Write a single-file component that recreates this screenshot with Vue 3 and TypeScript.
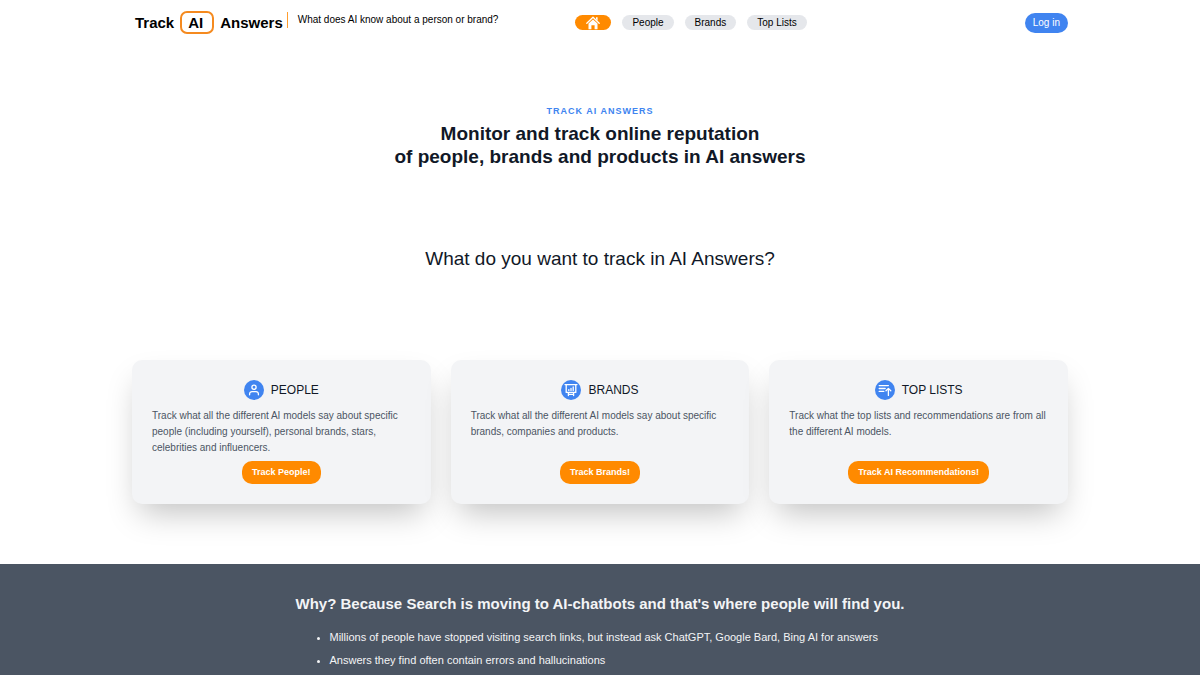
<script setup lang="ts">
interface Card {
  icon: 'person' | 'board' | 'list'
  title: string
  text: string
  action: string
}

const links: string[] = ['People', 'Brands', 'Top Lists']

const cards: Card[] = [
  {
    icon: 'person',
    title: 'PEOPLE',
    text: 'Track what all the different AI models say about specific people (including yourself), personal brands, stars, celebrities and influencers.',
    action: 'Track People!',
  },
  {
    icon: 'board',
    title: 'BRANDS',
    text: 'Track what all the different AI models say about specific brands, companies and products.',
    action: 'Track Brands!',
  },
  {
    icon: 'list',
    title: 'TOP LISTS',
    text: 'Track what the top lists and recommendations are from all the different AI models.',
    action: 'Track AI Recommendations!',
  },
]

const reasons: string[] = [
  'Millions of people have stopped visiting search links, but instead ask ChatGPT, Google Bard, Bing AI for answers',
  'Answers they find often contain errors and hallucinations',
]
</script>

<template>
  <div class="page">
    <header class="header wrap">
      <a class="logo" href="#" aria-label="Track AI Answers">
        <span>Track</span>
        <span class="logo-box">AI</span>
        <span>Answers</span>
      </a>
      <p class="tagline">What does AI know about a person or brand?</p>
      <nav class="nav">
        <a class="pill home" href="#" aria-label="Home">
          <svg viewBox="0 0 14 14" width="14" height="14" aria-hidden="true">
            <path d="M2.5 7.6V13.2H5.4V9.2H8.6V13.2H11.5V7.6L7 3.4Z" fill="#fff" />
            <path d="M0.8 7.2L7 1.3L13.2 7.2" fill="none" stroke="#fff" stroke-width="1.3" stroke-linecap="round" stroke-linejoin="round" />
            <path d="M10 1.2H11.6V4.8L10 3.3Z" fill="#fff" />
          </svg>
        </a>
        <a v-for="link in links" :key="link" class="pill" href="#">{{ link }}</a>
      </nav>
      <button class="login" type="button">Log in</button>
    </header>

    <main>
      <section class="hero">
        <p class="eyebrow">TRACK AI ANSWERS</p>
        <h1>Monitor and track online reputation<br />of people, brands and products in AI answers</h1>
      </section>

      <h2 class="question">What do you want to track in AI Answers?</h2>

      <section class="cards wrap">
        <article v-for="card in cards" :key="card.title" class="card">
          <div class="card-head">
            <span class="badge">
              <svg v-if="card.icon === 'person'" viewBox="0 0 20 20" width="20" height="20" aria-hidden="true">
                <circle cx="10" cy="7.3" r="2.1" />
                <path d="M5.6 14.8V14A2.4 2.4 0 0 1 8 11.6H12A2.4 2.4 0 0 1 14.4 14V14.8" />
              </svg>
              <svg v-else-if="card.icon === 'board'" viewBox="0 0 20 20" width="20" height="20" aria-hidden="true">
                <path d="M4 4.6H16M5.2 4.6V12.4H14.8V4.6M7.4 12.6V15.6M12.6 12.6V15.6M7.4 14.3H12.6" />
                <path d="M7.8 10.4V9.6M10 10.4V8.4M12.2 10.4V7" />
              </svg>
              <svg v-else viewBox="0 0 20 20" width="20" height="20" aria-hidden="true">
                <path d="M4.2 5.6H13.4M4.2 8.5H10.2M4.2 11.4H8.8" />
                <path d="M13.4 15.4V8.6M11 10.8L13.4 8.4L15.8 10.8" />
              </svg>
            </span>
            <h3>{{ card.title }}</h3>
          </div>
          <p class="card-text">{{ card.text }}</p>
          <button class="action" type="button">{{ card.action }}</button>
        </article>
      </section>

      <section class="why">
        <div class="why-inner">
          <h2>Why? Because Search is moving to AI-chatbots and that's where people will find you.</h2>
          <ul>
            <li v-for="reason in reasons" :key="reason">{{ reason }}</li>
          </ul>
        </div>
      </section>
    </main>
  </div>
</template>

<style>
body {
  margin: 0;
  background: #fff;
}
</style>

<style scoped>
.page {
  height: 100vh;
  overflow: hidden;
  display: flex;
  flex-direction: column;
  font-family: "Liberation Sans", Arial, sans-serif;
  font-size: 10px;
  color: #111827;
}

main {
  flex: 1;
  display: flex;
  flex-direction: column;
}

h1,
h2,
h3,
p,
ul {
  margin: 0;
}

a {
  color: inherit;
  text-decoration: none;
}

button {
  border: 0;
  font-family: inherit;
  cursor: pointer;
}

.wrap {
  box-sizing: border-box;
  width: 100%;
  max-width: 936px;
  margin: 0 auto;
}

.header {
  display: flex;
  align-items: center;
  height: 45px;
  padding-left: 3px;
}

.logo {
  display: flex;
  align-items: center;
  gap: 6px;
  font-size: 15px;
  line-height: 19px;
  font-weight: 700;
  color: #000;
}

.logo-box {
  padding: 0 9px 0 6px;
  border: 2px solid #f58a1f;
  border-radius: 7px;
}

.tagline {
  align-self: flex-start;
  margin: 12px 0 0 4px;
  padding-left: 10px;
  border-left: 1px solid #ff9d2e;
  line-height: 16px;
  color: #000;
}

.nav {
  display: flex;
  gap: 11px;
  margin-left: 77px;
}

.pill {
  display: flex;
  align-items: center;
  height: 15px;
  padding: 0 10px;
  border-radius: 8px;
  background: #e5e7eb;
  color: #000;
}

.home {
  padding: 0 11px;
  background: #ff8a00;
}

.login {
  margin-left: auto;
  padding: 0 8px;
  border-radius: 10px;
  background: #4084f0;
  color: #fff;
  font-size: 10px;
  line-height: 20px;
}

.hero {
  padding-top: 60px;
  text-align: center;
}

.eyebrow {
  font-size: 9px;
  line-height: 12px;
  font-weight: 700;
  letter-spacing: 1px;
  color: #4084f0;
}

h1 {
  margin-top: 5px;
  font-size: 19px;
  line-height: 23px;
}

.question {
  margin-top: 79px;
  text-align: center;
  font-size: 19px;
  line-height: 24px;
  font-weight: 400;
}

.cards {
  display: grid;
  grid-template-columns: repeat(3, 1fr);
  gap: 20px;
  margin-top: 89px;
}

.card {
  display: flex;
  flex-direction: column;
  align-items: center;
  padding: 20px;
  border-radius: 10px;
  background: #f3f4f6;
  box-shadow: 0 16px 32px -8px rgba(0, 0, 0, 0.25);
}

.card-head {
  display: flex;
  align-items: center;
  gap: 7px;
}

.card-head h3 {
  font-size: 12px;
  line-height: 20px;
  font-weight: 400;
}

.badge {
  display: flex;
  width: 20px;
  height: 20px;
  border-radius: 50%;
  background: #4084f0;
}

.badge svg {
  fill: none;
  stroke: #fff;
  stroke-width: 1.3;
  stroke-linecap: round;
  stroke-linejoin: round;
}

.card-text {
  align-self: stretch;
  margin: 8px 0 5px;
  line-height: 16px;
  color: #4b5563;
}

.action {
  margin-top: auto;
  padding: 0 10px;
  border-radius: 10px;
  background: #ff8a00;
  color: #fff;
  font-size: 9px;
  line-height: 23px;
  font-weight: 700;
}

.why {
  flex: 1;
  display: flex;
  justify-content: center;
  margin-top: 60px;
  padding-top: 30px;
  background: #4b5563;
  color: #f3f4f6;
}

.why h2 {
  font-size: 15px;
  line-height: 20px;
}

.why ul {
  margin-top: 12px;
  padding-left: 34px;
  font-size: 11px;
  line-height: 23px;
}
</style>
